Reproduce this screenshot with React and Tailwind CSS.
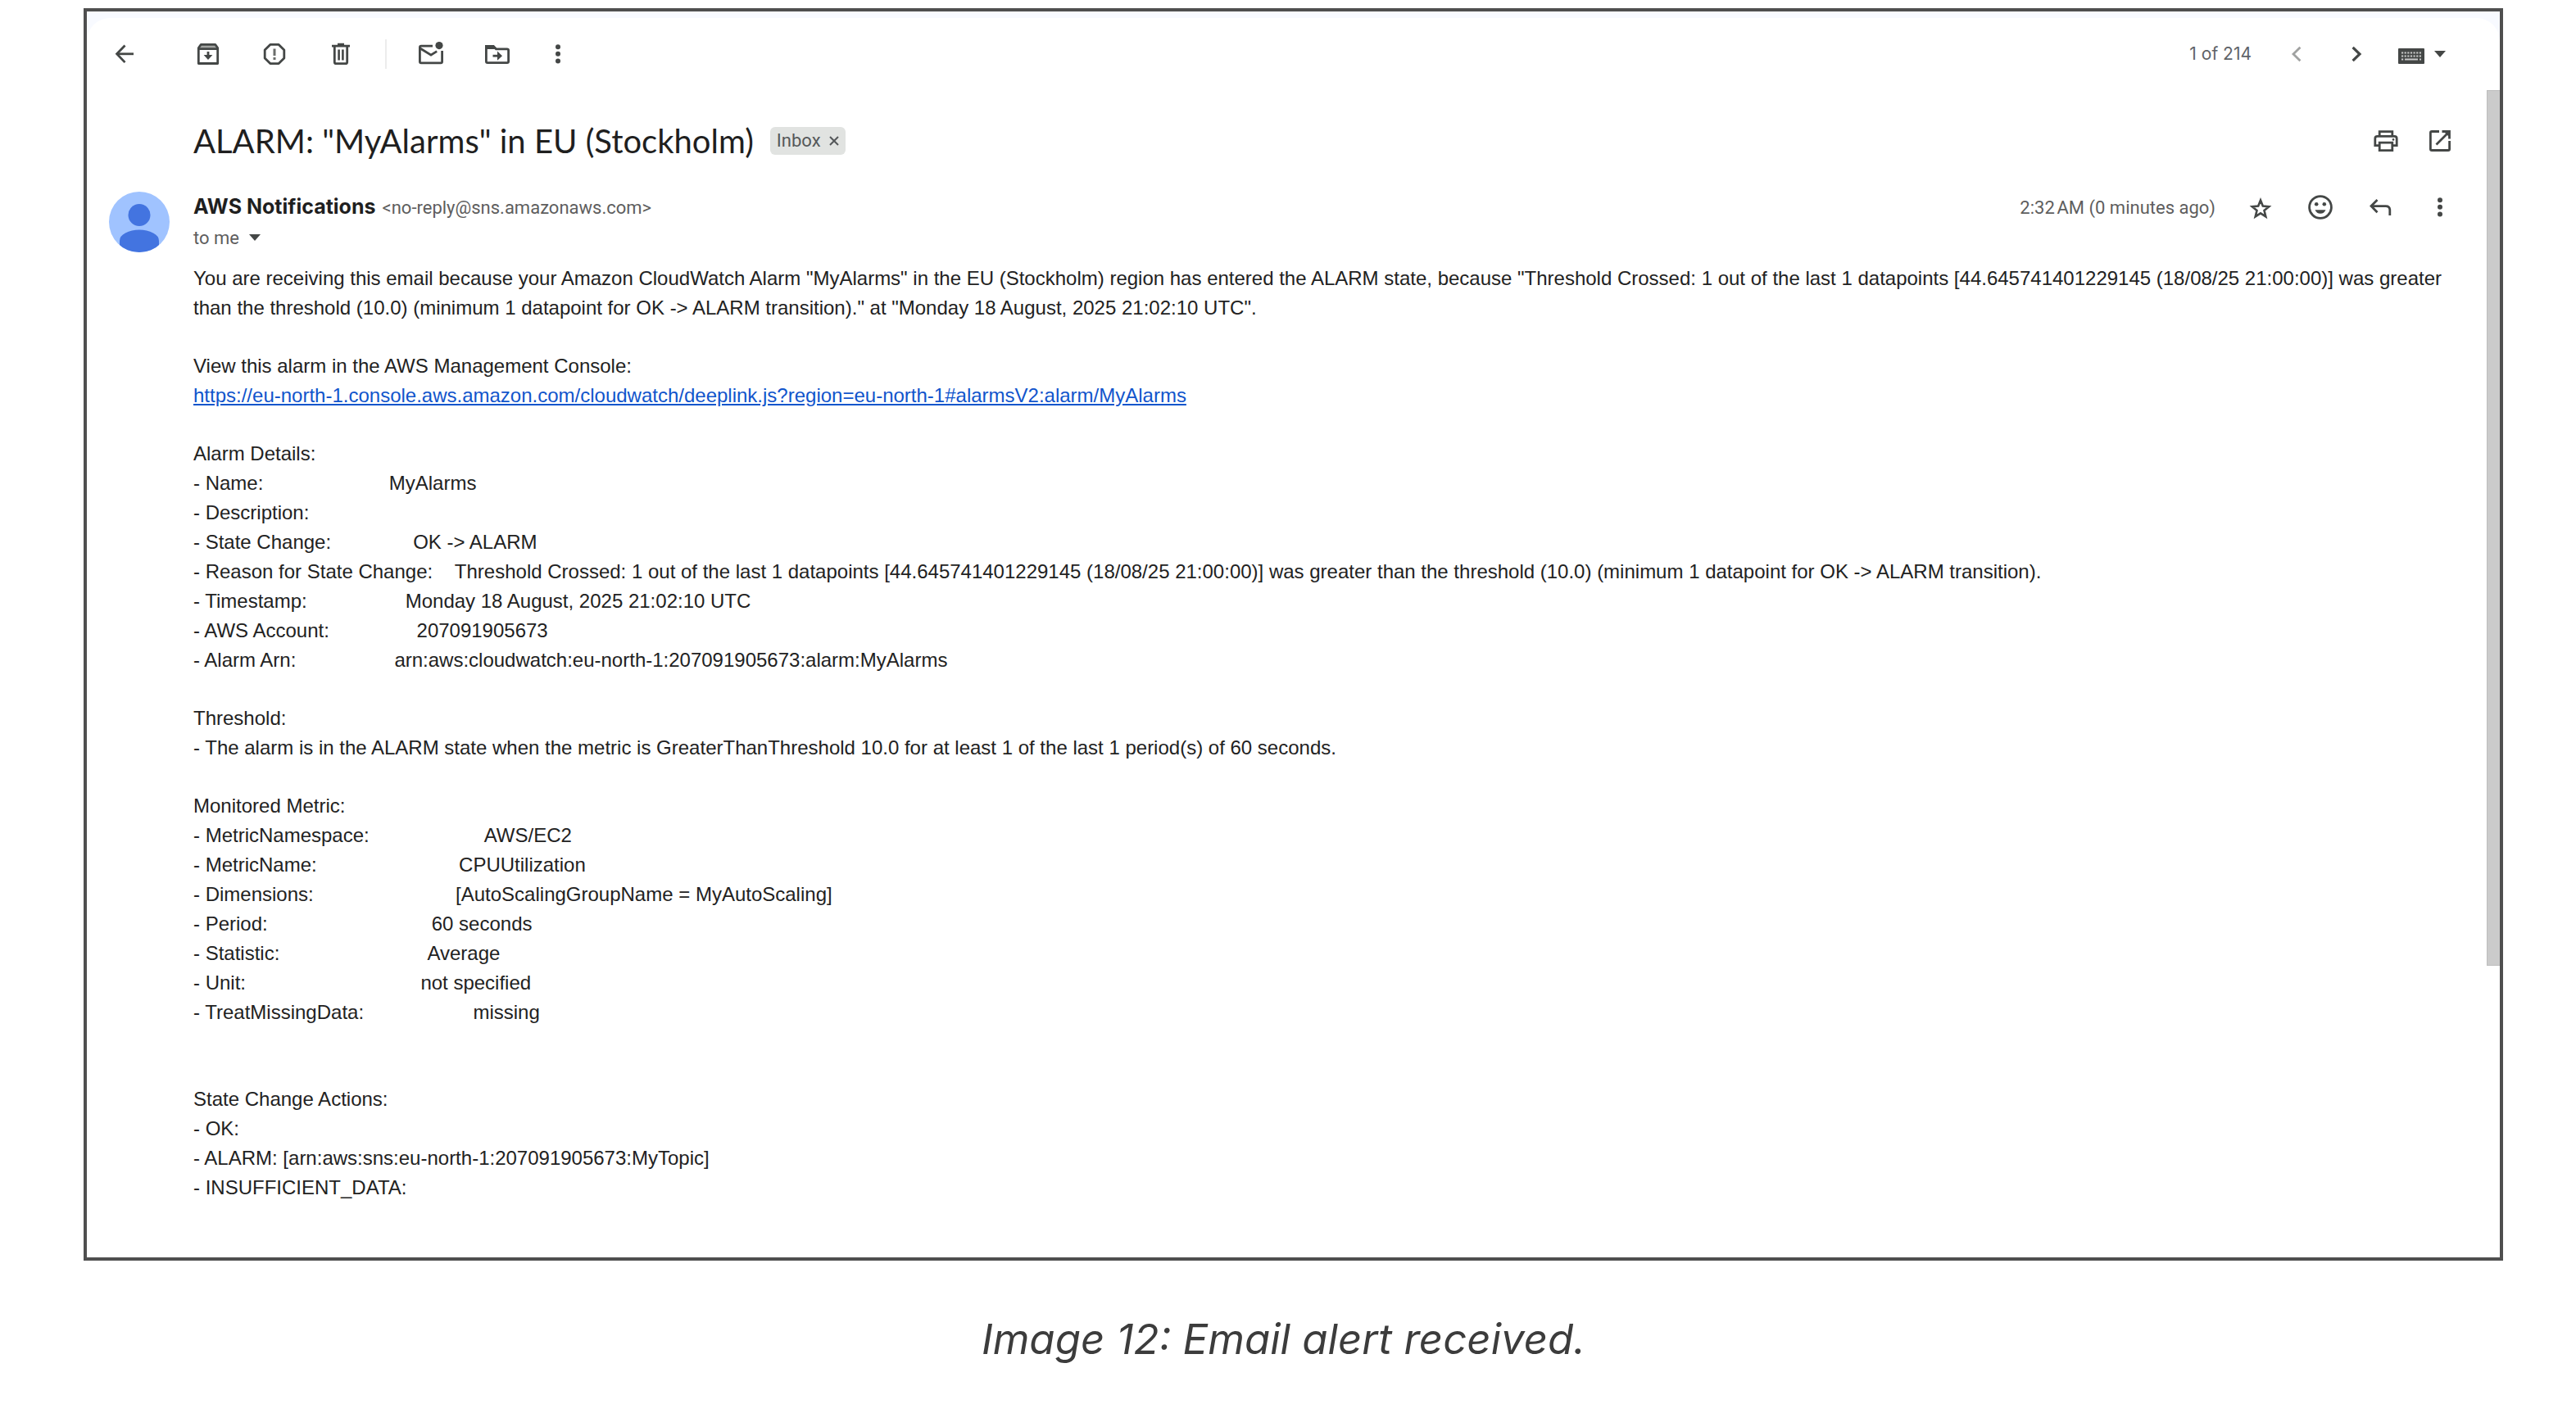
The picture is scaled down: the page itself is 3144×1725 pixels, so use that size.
import React from 'react';

function Svg({ children }) {
  return (
    <svg viewBox="0 0 36 36" className="size-9" fill="none" stroke="currentColor" strokeWidth="2.8" aria-hidden="true">
      {children}
    </svg>
  );
}

const BackIcon = () => (
  <Svg>
    <path d="M29 17.8H9" />
    <path d="M18.5 7.5 8.6 17.8l9.9 10.3" />
  </Svg>
);

const ArchiveIcon = () => (
  <Svg>
    <path d="M9 6.5h18l2.5 4H6.5z" fill="#a3a5a3" stroke="none" />
    <path d="M9.3 6.3h17.4l3 4.2v19H6.3v-19z" strokeLinejoin="round" />
    <path d="M6.3 11.6h23.4" />
    <path d="M18 15v6.5" />
    <path d="M12.6 19h10.8L18 25z" fill="currentColor" stroke="none" />
  </Svg>
);

const SpamIcon = () => (
  <Svg>
    <path d="M12.8 6.4h10.4l6.6 6.6v10l-6.6 6.6H12.8L6.2 23V13z" strokeLinejoin="round" />
    <path d="M18 11.5v8.5M18 22v3" strokeWidth="3" stroke="#6b6d6b" />
  </Svg>
);

const DeleteIcon = () => (
  <Svg>
    <path d="M7 8.2h22M14 6.2h8" />
    <path d="M10.3 8.5v19.2q0 2 2 2h11.4q2 0 2-2V8.5" />
    <path d="M15.6 12.5v13M20.4 12.5v13" strokeWidth="2.6" />
  </Svg>
);

const UnreadIcon = () => (
  <Svg>
    <path d="M20 8.2H6q-1.6 0-1.6 1.6v17.4q0 1.6 1.6 1.6h24q1.6 0 1.6-1.6V14" />
    <path d="M4.8 11 18 19.2l7.2-4.6" />
    <circle cx="28" cy="7.6" r="4.6" fill="currentColor" stroke="none" />
  </Svg>
);

const MoveIcon = () => (
  <Svg>
    <path d="M4.4 27V8.4h8.8l3.2 3.4h13.4q1.8 0 1.8 1.8V27q0 1.6-1.6 1.6H6q-1.6 0-1.6-1.6z" />
    <path d="M4 7h9.5l4 5H4z" fill="currentColor" stroke="none" />
    <path d="M12.5 20.2h8" />
    <path d="M18 14.6l6 5.6-6 5.6z" fill="currentColor" stroke="none" />
  </Svg>
);

const MoreIcon = () => (
  <Svg>
    <g fill="currentColor" stroke="none">
      <circle cx="18" cy="9.2" r="3" />
      <circle cx="18" cy="17.8" r="3" />
      <circle cx="18" cy="26.4" r="3" />
    </g>
  </Svg>
);

const NewerIcon = () => (
  <Svg>
    <path d="M22.4 9.8 14 18l8.4 8.2" />
  </Svg>
);

const OlderIcon = () => (
  <Svg>
    <path d="M13.6 9.8 22 18l-8.4 8.2" strokeWidth="3.2" />
  </Svg>
);

const KeyboardIcon = () => (
  <svg viewBox="0 0 32 24" className="h-6 w-8" aria-hidden="true">
    <rect x="0" y="5" width="32" height="19" rx="1" fill="#444746" />
    <path d="M4 10.5h24M4 14.5h24" stroke="#c9cac9" strokeWidth="2.2" strokeDasharray="2.2 1.43" />
    <path d="M4 18.5h2.2M8 18.5h16M26 18.5h2" stroke="#c9cac9" strokeWidth="2.2" />
  </svg>
);

const CaretIcon = () => (
  <svg viewBox="0 0 14 8" className="h-2 w-3.5" fill="currentColor" aria-hidden="true">
    <path d="M0 0h14L7 8z" />
  </svg>
);

const PrintIcon = () => (
  <Svg>
    <path d="M10.2 12.5V6.6h15.6v5.9" />
    <path d="M10 23.6H4.8v-8.4q0-2.8 2.8-2.8h20.8q2.8 0 2.8 2.8v8.4H26" />
    <path d="M10.2 20.2h15.6v9.4H10.2z" />
    <circle cx="27" cy="16.4" r="1.3" fill="currentColor" stroke="none" />
  </Svg>
);

const OpenIcon = () => (
  <Svg>
    <path d="M17 6.5H8q-1.6 0-1.6 1.6v19.8q0 1.6 1.6 1.6h20q1.6 0 1.6-1.6V18" />
    <path d="M13.5 22.5 28 8M20.5 6.5h9v9" />
    <path d="M22 6h8v8z" fill="currentColor" stroke="none" />
  </Svg>
);

const StarIcon = () => (
  <Svg>
    <path d="m18 9.6 2.8 7 7.4.6-5.7 4.8 1.8 7.3-6.3-4-6.3 4 1.8-7.3-5.7-4.8 7.4-.6z" strokeWidth="2.6" />
  </Svg>
);

const ReactIcon = () => (
  <Svg>
    <circle cx="18" cy="18" r="13.4" />
    <circle cx="13.2" cy="14.3" r="2.3" fill="currentColor" stroke="none" />
    <circle cx="22.8" cy="14.3" r="2.3" fill="currentColor" stroke="none" />
    <path d="M11.5 21.2h13q-2 4.6-6.5 4.6t-6.5-4.6z" fill="currentColor" stroke="none" />
  </Svg>
);

const ReplyIcon = () => (
  <Svg>
    <path d="M14.5 9 7 16.6l7.5 7.6" />
    <path d="M7.5 16.6h17.3q5 0 5 5V28" />
  </Svg>
);

function IconButton({ label, children, className = '' }) {
  return (
    <button type="button" aria-label={label} className={`shrink-0 text-[#444746] ${className}`}>
      {children}
    </button>
  );
}

const Avatar = () => (
  <svg viewBox="0 0 74 74" className="size-[74px] shrink-0" role="img" aria-label="AWS Notifications">
    <defs>
      <clipPath id="avatar-clip">
        <circle cx="37" cy="37" r="37" />
      </clipPath>
    </defs>
    <g clipPath="url(#avatar-clip)">
      <rect width="74" height="74" fill="#a0c3ff" />
      <circle cx="37" cy="28.5" r="13.5" fill="#4374e0" />
      <path d="M13 60q0-6 7-9.5 7.5-4 17-4t17 4q7 3.5 7 9.5v14H13z" fill="#4374e0" />
    </g>
  </svg>
);

function Toolbar() {
  return (
    <div className="flex h-[88px] items-center justify-between pr-[66px] pl-7">
      <div className="flex items-center">
        <IconButton label="Back to Inbox"><BackIcon /></IconButton>
        <div className="ml-[66px] flex gap-[45px]">
          <IconButton label="Archive"><ArchiveIcon /></IconButton>
          <IconButton label="Report spam"><SpamIcon /></IconButton>
          <IconButton label="Delete"><DeleteIcon /></IconButton>
        </div>
        <div className="mx-9 h-9 w-0.5 bg-[#ececec]" />
        <div className="flex gap-[45px]">
          <IconButton label="Mark as unread"><UnreadIcon /></IconButton>
          <IconButton label="Move to"><MoveIcon /></IconButton>
        </div>
        <IconButton label="More" className="ml-[38px]"><MoreIcon /></IconButton>
      </div>
      <div className="flex items-center gap-[37px]">
        <span className="font-['Inter',sans-serif] text-[21px] text-[#5f6368]">1 of 214</span>
        <IconButton label="Newer" className="opacity-50"><NewerIcon /></IconButton>
        <IconButton label="Older"><OlderIcon /></IconButton>
        <button type="button" aria-label="Select input tool" className="-ml-1 flex items-center gap-3 text-[#444746]">
          <KeyboardIcon />
          <CaretIcon />
        </button>
      </div>
    </div>
  );
}

const pad = (pairs, width) => pairs.map(([k, v]) => (v ? `- ${k}:`.padEnd(width, '\u00a0') + v : `- ${k}:`));

const REASON =
  'Threshold Crossed: 1 out of the last 1 datapoints [44.645741401229145 (18/08/25 21:00:00)] was greater than the threshold (10.0) (minimum 1 datapoint for OK -> ALARM transition).';
const INTRO = `You are receiving this email because your Amazon CloudWatch Alarm "MyAlarms" in the EU (Stockholm) region has entered the ALARM state, because "${REASON}" at "Monday 18 August, 2025 21:02:10 UTC".`;
const LINK =
  'https://eu-north-1.console.aws.amazon.com/cloudwatch/deeplink.js?region=eu-north-1#alarmsV2:alarm/MyAlarms';

const details = pad(
  [
    ['Name', 'MyAlarms'],
    ['Description', ''],
    ['State Change', 'OK -> ALARM'],
    ['Reason for State Change', REASON],
    ['Timestamp', 'Monday 18 August, 2025 21:02:10 UTC'],
    ['AWS Account', '207091905673'],
    ['Alarm Arn', 'arn:aws:cloudwatch:eu-north-1:207091905673:alarm:MyAlarms'],
  ],
  30
);

const metric = pad(
  [
    ['MetricNamespace', 'AWS/EC2'],
    ['MetricName', 'CPUUtilization'],
    ['Dimensions', '[AutoScalingGroupName = MyAutoScaling]'],
    ['Period', '60 seconds'],
    ['Statistic', 'Average'],
    ['Unit', 'not specified'],
    ['TreatMissingData', 'missing'],
  ],
  39
);

function Section({ title, lines, className = '' }) {
  return (
    <section className={className}>
      <h2>{title}</h2>
      {lines.map((line) => (
        <p key={line}>{line}</p>
      ))}
    </section>
  );
}

function Body() {
  return (
    <div className="mt-[14px] flex flex-col gap-[35px] pb-[67px] pl-[130px] font-['Liberation_Sans',Arial,sans-serif] text-2xl leading-9 text-[#222222]">
      <p>{INTRO}</p>
      <div>
        <p>View this alarm in the AWS Management Console:</p>
        <a href={LINK} className="text-[#1155cc] underline">{LINK}</a>
      </div>
      <Section title="Alarm Details:" lines={details} />
      <Section
        title="Threshold:"
        lines={['- The alarm is in the ALARM state when the metric is GreaterThanThreshold 10.0 for at least 1 of the last 1 period(s) of 60 seconds.']}
      />
      <Section title="Monitored Metric:" lines={metric} />
      <Section
        className="mt-[35px]"
        title="State Change Actions:"
        lines={['- OK:', '- ALARM: [arn:aws:sns:eu-north-1:207091905673:MyTopic]', '- INSUFFICIENT_DATA:']}
      />
    </div>
  );
}

function Message() {
  return (
    <article className="min-w-0 flex-1 pt-[22px] pr-[39px]">
      <div className="flex h-20 items-center justify-between pl-[130px]">
        <div className="flex items-center gap-5">
          <h1 className="font-['Lato',sans-serif] text-[40px] leading-none text-[#1f1f1f]">
            ALARM: "MyAlarms" in EU (Stockholm)
          </h1>
          <div className="flex h-[34px] items-center gap-[10px] rounded-md bg-[#e1e3e1] px-2 font-['Roboto',sans-serif] text-[22px] leading-none text-[#55585a]">
            Inbox
            <button type="button" aria-label="Remove label Inbox">
              <svg viewBox="0 0 12 12" className="size-3" stroke="currentColor" strokeWidth="2" aria-hidden="true">
                <path d="m1 1 10 10M11 1 1 11" />
              </svg>
            </button>
          </div>
        </div>
        <div className="flex gap-[30px]">
          <IconButton label="Print all"><PrintIcon /></IconButton>
          <IconButton label="In new window"><OpenIcon /></IconButton>
        </div>
      </div>

      <div className="mt-[22px] flex gap-[29px] pl-[27px] font-['Roboto',sans-serif] text-[22px] text-[#5e5e5e]">
        <Avatar />
        <div className="min-w-0 flex-1">
          <div className="flex h-[38px] items-center justify-between">
            <div className="flex items-baseline gap-2">
              <span className="font-['Inter',sans-serif] text-[25px] font-bold text-[#1f1f1f]">AWS Notifications</span>
              <span>&lt;no-reply@sns.amazonaws.com&gt;</span>
            </div>
            <div className="flex items-center gap-[37px]">
              <span>2:32{'\u202f'}AM (0 minutes ago)</span>
              <IconButton label="Not starred"><StarIcon /></IconButton>
              <IconButton label="Add reaction"><ReactIcon /></IconButton>
              <IconButton label="Reply"><ReplyIcon /></IconButton>
              <IconButton label="More message options"><MoreIcon /></IconButton>
            </div>
          </div>
          <div className="flex h-9 items-center gap-3">
            to me
            <button type="button" aria-label="Show details" className="text-[#444746]">
              <CaretIcon />
            </button>
          </div>
        </div>
      </div>

      <Body />
    </article>
  );
}

export default function App() {
  return (
    <div className="min-h-screen bg-white pt-[10px] pr-[89px] pb-10 pl-[102px]">
      <figure>
        <div className="border-4 border-[#4f4f4f] bg-[#f8faff] pt-2">
          <div className="rounded-t-[28px] bg-white">
            <Toolbar />
            <div className="flex">
              <Message />
              <div className="w-4">
                <div className="h-3/4 border border-r-0 border-[#bdbdbd] bg-[#cbcbcb]" />
              </div>
            </div>
          </div>
        </div>
        <figcaption className="mt-[62px] pr-6 text-center font-['Inter',sans-serif] text-[51px] leading-[68px] text-[#3c3c3c] italic">
          Image 12: Email alert received.
        </figcaption>
      </figure>
    </div>
  );
}
